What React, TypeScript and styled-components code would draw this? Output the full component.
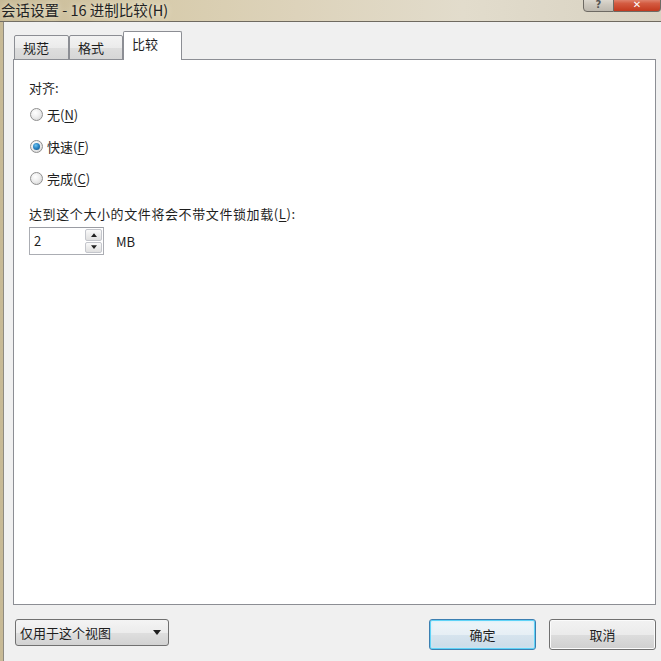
import React from "react";
import styled, { createGlobalStyle } from "styled-components";

const Global = createGlobalStyle`
  html, body { margin: 0; padding: 0; background: #d6cdb4; }
  body { font-family: "Noto Sans CJK SC", "Microsoft YaHei", "Noto Sans", sans-serif; }
  * { box-sizing: border-box; }
`;

const Window = styled.div`
  width: 661px;
  height: 661px;
  overflow: hidden;
  display: flex;
  flex-direction: column;
  background: linear-gradient(90deg, #c7b995 0%, #d6caa9 20%, #ddd3bb 45%, #e2dccc 70%, #d8d2c2 100%);
  color: #1e1e1e;
`;

const TitleBar = styled.div`
  height: 22px;
  flex: none;
  display: flex;
  align-items: flex-start;
  justify-content: space-between;
  border-bottom: 1px solid #6f6a60;
`;

const Title = styled.div`
  font-size: 14.5px;
  line-height: 17px;
  margin-top: 1px;
  padding-left: 1px;
  color: #222;
  text-shadow: 0 0 6px rgba(255, 255, 240, 0.9);
  white-space: nowrap;
`;

const Caption = styled.div`
  display: flex;
  margin-top: -4px;
`;

const CapButton = styled.div<{ $close?: boolean }>`
  width: ${(p) => (p.$close ? "47px" : "31px")};
  height: 16px;
  display: flex;
  align-items: flex-end;
  justify-content: center;
  padding-bottom: 1px;
  border: 1px solid #6e6a63;
  border-left: ${(p) => (p.$close ? "none" : "1px solid #6e6a63")};
  border-radius: ${(p) => (p.$close ? "0 0 4px 0" : "0 0 0 4px")};
  background: ${(p) =>
    p.$close
      ? "linear-gradient(180deg, #e8a493 0%, #d45c42 45%, #c3391e 100%)"
      : "linear-gradient(180deg, #e6e2da 0%, #cfcac0 50%, #bdb8ae 100%)"};
  color: ${(p) => (p.$close ? "#fff" : "#555")};
  font-family: "DejaVu Sans", sans-serif;
  font-size: 10px;
  font-weight: bold;
  line-height: 10px;
`;

const Frame = styled.div`
  flex: 1;
  display: flex;
  padding-left: 3px;
`;

const Client = styled.div`
  flex: 1;
  background: #f0f0f0;
  border-left: 1px solid #8e8a80;
  padding-top: 9px;
  display: flex;
  flex-direction: column;
`;

const TabStrip = styled.div`
  display: flex;
  align-items: flex-end;
  margin-left: 10px;
  height: 29px;
  position: relative;
  z-index: 1;
  margin-bottom: -1px;
`;

const Tab = styled.div<{ $active?: boolean; $w: number }>`
  width: ${(p) => p.$w}px;
  height: ${(p) => (p.$active ? "29px" : "25px")};
  border: 1px solid #8c8e94;
  border-bottom: ${(p) => (p.$active ? "none" : "1px solid #8c8e94")};
  border-radius: 2px 2px 0 0;
  background: ${(p) =>
    p.$active ? "#fff" : "linear-gradient(180deg, #f3f3f3 0%, #ebebeb 50%, #dedede 51%, #d6d6d6 100%)"};
  font-size: 13px;
  line-height: 16px;
  padding-top: 4px;
  padding-left: 8px;
  color: #1e1e1e;
  position: relative;
  z-index: ${(p) => (p.$active ? 2 : 1)};
`;

const Panel = styled.div`
  width: 643px;
  height: 546px;
  margin-left: 9px;
  background: #fff;
  border: 1px solid #8c8e94;
  padding: 20px 0 0 15px;
  display: flex;
  flex-direction: column;
  align-items: flex-start;
`;

const Label = styled.div<{ $mt?: number; $spread?: number }>`
  font-size: 13px;
  line-height: 16px;
  margin-top: ${(p) => p.$mt ?? 0}px;
  letter-spacing: ${(p) => p.$spread ?? 0}px;
  color: #1e1e1e;
`;

const Under = styled.span`
  text-decoration: underline;
  text-underline-offset: 2px;
`;

const RadioList = styled.div`
  display: flex;
  flex-direction: column;
  gap: 16px;
  margin-top: 10px;
`;

const RadioRow = styled.div`
  display: flex;
  align-items: center;
  gap: 4px;
  height: 16px;
  font-size: 13px;
  color: #1e1e1e;
`;

const RadioDot = styled.span<{ $on?: boolean }>`
  width: 13px;
  height: 13px;
  margin-left: 1px;
  border-radius: 50%;
  border: 1px solid #8f8f8f;
  background: radial-gradient(circle at 40% 35%, #ffffff 0%, #eeeeee 45%, #cfcfcf 100%);
  display: flex;
  align-items: center;
  justify-content: center;
  &::after {
    content: "";
    display: ${(p) => (p.$on ? "block" : "none")};
    width: 7px;
    height: 7px;
    border-radius: 50%;
    background: radial-gradient(circle at 40% 35%, #6fc4ee 0%, #2a86c6 45%, #0f4a7a 100%);
  }
`;

const SpinRow = styled.div`
  display: flex;
  align-items: center;
  gap: 12px;
  margin-top: 5px;
`;

const SpinBox = styled.div`
  width: 75px;
  height: 28px;
  border: 1px solid #abadb3;
  border-top-color: #9a9ca3;
  background: #fff;
  display: flex;
  align-items: stretch;
`;

const SpinText = styled.div`
  flex: 1;
  font-size: 13px;
  line-height: 26px;
  padding-left: 4px;
`;

const SpinButtons = styled.div`
  width: 18px;
  display: flex;
  flex-direction: column;
  padding: 1px 1px 1px 0;
  gap: 1px;
`;

const SpinBtn = styled.div`
  flex: 1;
  border: 1px solid #c4c6cc;
  border-radius: 2px;
  background: linear-gradient(180deg, #fafafa 0%, #ececec 50%, #e0e0e0 100%);
  display: flex;
  align-items: center;
  justify-content: center;
`;

const Unit = styled.div`
  font-size: 13px;
  color: #1e1e1e;
`;

const Footer = styled.div`
  display: flex;
  align-items: flex-start;
  justify-content: space-between;
  margin-top: 14px;
  padding: 0 5px 0 11px;
`;

const Combo = styled.div`
  width: 154px;
  height: 27px;
  border: 1px solid #707070;
  border-radius: 3px;
  background: linear-gradient(180deg, #f4f4f4 0%, #ececec 50%, #dfdfdf 51%, #d2d2d2 100%);
  display: flex;
  align-items: center;
  justify-content: space-between;
  padding: 0 7px 0 4px;
  font-size: 13px;
  color: #1e1e1e;
`;

const Buttons = styled.div`
  display: flex;
  gap: 13px;
`;

const PushButton = styled.div<{ $default?: boolean }>`
  width: 107px;
  height: 31px;
  border: 1px solid ${(p) => (p.$default ? "#3c7fb1" : "#707070")};
  border-radius: 3px;
  box-shadow: ${(p) => (p.$default ? "inset 0 0 0 1px #5fd3f7, inset 0 0 3px 1px #c8ecfa" : "inset 0 0 0 1px #fbfbfb")};
  background: ${(p) =>
    p.$default
      ? "linear-gradient(180deg, #eef5f9 0%, #e6eff5 50%, #d6e4ee 51%, #cbdbe7 100%)"
      : "linear-gradient(180deg, #f2f2f2 0%, #ebebeb 50%, #dddddd 51%, #cfcfcf 100%)"};
  display: flex;
  align-items: center;
  justify-content: center;
  font-size: 13px;
  color: #1e1e1e;
`;

const Arrow = ({ up, size = 7 }: { up?: boolean; size?: number }) => (
  <svg width={size} height={Math.ceil(size / 2) + 1} viewBox="0 0 8 5">
    <path d={up ? "M0 5 L4 0 L8 5 Z" : "M0 0 L8 0 L4 5 Z"} fill="#202020" />
  </svg>
);

export default function App() {
  return (
    <>
      <Global />
      <Window>
        <TitleBar>
          <Title>会话设置 - 16 进制比较(H)</Title>
          <Caption>
            <CapButton>?</CapButton>
            <CapButton $close>✕</CapButton>
          </Caption>
        </TitleBar>
        <Frame>
          <Client>
            <TabStrip>
              <Tab $w={55}>规范</Tab>
              <Tab $w={54}>格式</Tab>
              <Tab $active $w={59}>比较</Tab>
            </TabStrip>
            <Panel>
              <Label>对齐:</Label>
              <RadioList>
                <RadioRow>
                  <RadioDot />
                  <span>
                    无(<Under>N</Under>)
                  </span>
                </RadioRow>
                <RadioRow>
                  <RadioDot $on />
                  <span>
                    快速(<Under>F</Under>)
                  </span>
                </RadioRow>
                <RadioRow>
                  <RadioDot />
                  <span>
                    完成(<Under>C</Under>)
                  </span>
                </RadioRow>
              </RadioList>
              <Label $mt={20} $spread={0.6}>
                达到这个大小的文件将会不带文件锁加载(<Under>L</Under>):
              </Label>
              <SpinRow>
                <SpinBox>
                  <SpinText>2</SpinText>
                  <SpinButtons>
                    <SpinBtn>
                      <Arrow up size={6} />
                    </SpinBtn>
                    <SpinBtn>
                      <Arrow size={6} />
                    </SpinBtn>
                  </SpinButtons>
                </SpinBox>
                <Unit>MB</Unit>
              </SpinRow>
            </Panel>
            <Footer>
              <Combo>
                <span>仅用于这个视图</span>
                <Arrow size={8} />
              </Combo>
              <Buttons>
                <PushButton $default>确定</PushButton>
                <PushButton>取消</PushButton>
              </Buttons>
            </Footer>
          </Client>
        </Frame>
      </Window>
    </>
  );
}
